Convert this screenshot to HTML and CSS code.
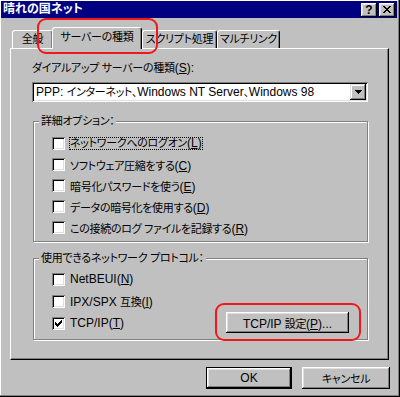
FILE: index.html
```html
<!DOCTYPE html>
<html lang="ja">
<head>
    <meta charset="UTF-8">
    <title>晴れの国ネット</title>
    <link rel="stylesheet" href="styles.css">
</head>
<body>
    <div class="window">
        <div class="titlebar">
            <span class="title">晴れの国ネット</span>
            <div class="title-buttons">
                <span class="tbtn help">?</span>
                <span class="tbtn">
                    <svg width="8" height="7" viewBox="0 0 8 7" shape-rendering="crispEdges"><path d="M0 0h2v1h-2zM6 0h2v1h-2zM1 1h2v1h-2zM5 1h2v1h-2zM2 2h4v1h-4zM3 3h2v1h-2zM2 4h4v1h-4zM1 5h2v1h-2zM5 5h2v1h-2zM0 6h2v1h-2zM6 6h2v1h-2z" fill="#000"/></svg>
                </span>
            </div>
        </div>

        <div class="tabs">
            <div class="tab tab-general">全般</div>
            <div class="tab tab-server active">サーバーの種類</div>
            <div class="tab tab-script">スクリプト処理</div>
            <div class="tab tab-multi">マルチリンク</div>
        </div>

        <div class="panel">
            <div class="label">ダイアルアップ サーバーの種類<span class="en">(<u>S</u>):</span></div>
            <div class="select">
                <span class="select-text"><span class="en">PPP: </span>インターネット、<span class="en">Windows NT Server</span>、<span class="en">Windows 98</span></span>
                <span class="select-btn">
                    <svg width="7" height="4" viewBox="0 0 7 4" shape-rendering="crispEdges"><path d="M0 0h7v1h-7zM1 1h5v1h-5zM2 2h3v1h-3zM3 3h1v1h-1z" fill="#000"/></svg>
                </span>
            </div>

            <fieldset class="group options">
                <legend>詳細オプション：</legend>
                <div class="check"><span class="box"></span><span class="focus">ネットワークへのログオン<span class="en">(<u>L</u>)</span></span></div>
                <div class="check"><span class="box"></span><span>ソフトウェア圧縮をする<span class="en">(<u>C</u>)</span></span></div>
                <div class="check"><span class="box"></span><span>暗号化パスワードを使う<span class="en">(<u>E</u>)</span></span></div>
                <div class="check"><span class="box"></span><span>データの暗号化を使用する<span class="en">(<u>D</u>)</span></span></div>
                <div class="check"><span class="box"></span><span>この接続のログ ファイルを記録する<span class="en">(<u>R</u>)</span></span></div>
            </fieldset>

            <fieldset class="group protocols">
                <legend>使用できるネットワーク プロトコル：</legend>
                <div class="check"><span class="box"></span><span class="en">NetBEUI(<u>N</u>)</span></div>
                <div class="check"><span class="box"></span><span><span class="en">IPX/SPX </span>互換<span class="en">(<u>I</u>)</span></span></div>
                <div class="check"><span class="box">
                    <svg width="9" height="9" viewBox="0 0 9 9" shape-rendering="crispEdges"><path d="M1 3h1v3h-1zM2 4h1v3h-1zM3 5h1v3h-1zM4 4h1v3h-1zM5 3h1v3h-1zM6 2h1v3h-1zM7 1h1v3h-1z" fill="#000"/></svg>
                </span><span class="en">TCP/IP(<u>T</u>)</span></div>
                <button class="btn tcp-btn"><span class="en">TCP/IP </span>設定<span class="en">(<u>P</u>)...</span></button>
            </fieldset>
        </div>

        <div class="actions">
            <button class="btn btn-ok"><span class="en">OK</span></button>
            <button class="btn btn-cancel">キャンセル</button>
        </div>

        <div class="mark mark-tab"></div>
        <div class="mark mark-tcp"></div>
    </div>
</body>
</html>
```

FILE: styles.css
```css
* { box-sizing: border-box; }
body { margin: 0; background: #c0c0c0; font-family: "Liberation Sans", "Noto Sans CJK JP", sans-serif; font-size: 11px; font-feature-settings: "palt"; letter-spacing: -0.3px; color: #000; }
.en { font-size: 12px; letter-spacing: 0; }
u { text-decoration: underline; text-underline-offset: 1px; }

.window { position: relative; width: 400px; height: 397px; padding: 1px 3px 2px 1px; background: #c0c0c0; box-shadow: inset -1px -1px #000, inset -2px -2px #808080, inset 1px 1px #fff; }

.titlebar { height: 17px; background: #000080; color: #fff; display: flex; align-items: center; justify-content: space-between; padding: 0 2px 0 2px; }
.title { font-size: 12px; font-weight: bold; line-height: 17px; letter-spacing: 0; }
.title-buttons { display: flex; gap: 2px; }
.tbtn { width: 16px; height: 14px; display: flex; align-items: center; justify-content: center; background: #c0c0c0; color: #000; box-shadow: inset -1px -1px #000, inset 1px 1px #fff, inset -2px -2px #808080, inset 2px 2px #dfdfdf; }
.help { font-weight: bold; font-size: 12px; line-height: 14px; letter-spacing: 0; }

.tabs { display: flex; align-items: flex-end; height: 21px; margin: 9px 0 0 11px; }
.tab { height: 18px; line-height: 17px; text-align: center; white-space: nowrap; background: #c0c0c0; border-top: 1px solid #fff; border-left: 1px solid #fff; border-right: 1px solid #000; border-radius: 3px 3px 0 0; box-shadow: inset -1px 0 #808080; }
.tab-general { width: 41px; }
.tab-server { width: 90px; margin-left: -1px; }
.tab-script { width: 75px; }
.tab-multi { width: 63px; }
.tab.active { position: relative; z-index: 1; height: 22px; margin-bottom: -1px; line-height: 18px; padding-bottom: 3px; }

.panel { width: 379px; height: 312px; margin-left: 9px; padding: 12px 0 0 21px; border: 1px solid; border-color: #fff #000 #000 #fff; box-shadow: inset -1px -1px #808080; }
.label { line-height: 15px; }

.select { display: flex; align-items: center; justify-content: space-between; width: 336px; height: 20px; margin-top: 6px; padding: 2px; background: #fff; box-shadow: inset 1px 1px #808080, inset -1px -1px #fff, inset 2px 2px #000, inset -2px -2px #dfdfdf; }
.select-text { padding-left: 2px; line-height: 16px; white-space: nowrap; }
.select-btn { width: 16px; height: 16px; display: flex; align-items: center; justify-content: center; background: #c0c0c0; box-shadow: inset -1px -1px #000, inset 1px 1px #dfdfdf, inset -2px -2px #808080, inset 2px 2px #fff; }

.group { width: 335px; margin: 0 0 0 1px; border: 1px solid #808080; box-shadow: 1px 1px #fff, inset 1px 1px #fff; min-width: 0; }
.group legend { margin-left: -13px; padding: 0 2px; line-height: 14px; background: #c0c0c0; }
.options { margin-top: 12px; padding: 5px 18px 3px 18px; }
.options .check { height: 21px; }
.protocols { margin-top: 9px; padding: 3px 18px 5px 18px; display: grid; grid-template-columns: 1fr auto; grid-auto-rows: 22px; }
.protocols .check { grid-column: 1; }

.check { display: flex; align-items: center; }
.box { width: 13px; height: 13px; margin-right: 5px; display: flex; align-items: center; justify-content: center; background: #fff; box-shadow: inset 1px 1px #808080, inset -1px -1px #fff, inset 2px 2px #000, inset -2px -2px #dfdfdf; }
.focus { outline: 1px dotted #000; line-height: 11px; }

.btn { font: inherit; letter-spacing: inherit; color: #000; background: #c0c0c0; border: none; padding: 0; box-shadow: inset -1px -1px #000, inset 1px 1px #fff, inset -2px -2px #808080, inset 2px 2px #dfdfdf; }
.tcp-btn { grid-column: 2; grid-row: 3; width: 123px; height: 21px; }

.actions { display: flex; justify-content: flex-end; gap: 10px; margin: 7px 7px 0 0; }
.btn-ok { width: 86px; height: 22px; border: 1px solid #000; }
.btn-cancel { width: 88px; height: 22px; }

.mark { position: absolute; border: 2px solid #f21818; border-radius: 9px; }
.mark-tab { left: 37px; top: 18px; width: 121px; height: 36px; }
.mark-tcp { left: 215px; top: 303px; width: 146px; height: 38px; }
```
